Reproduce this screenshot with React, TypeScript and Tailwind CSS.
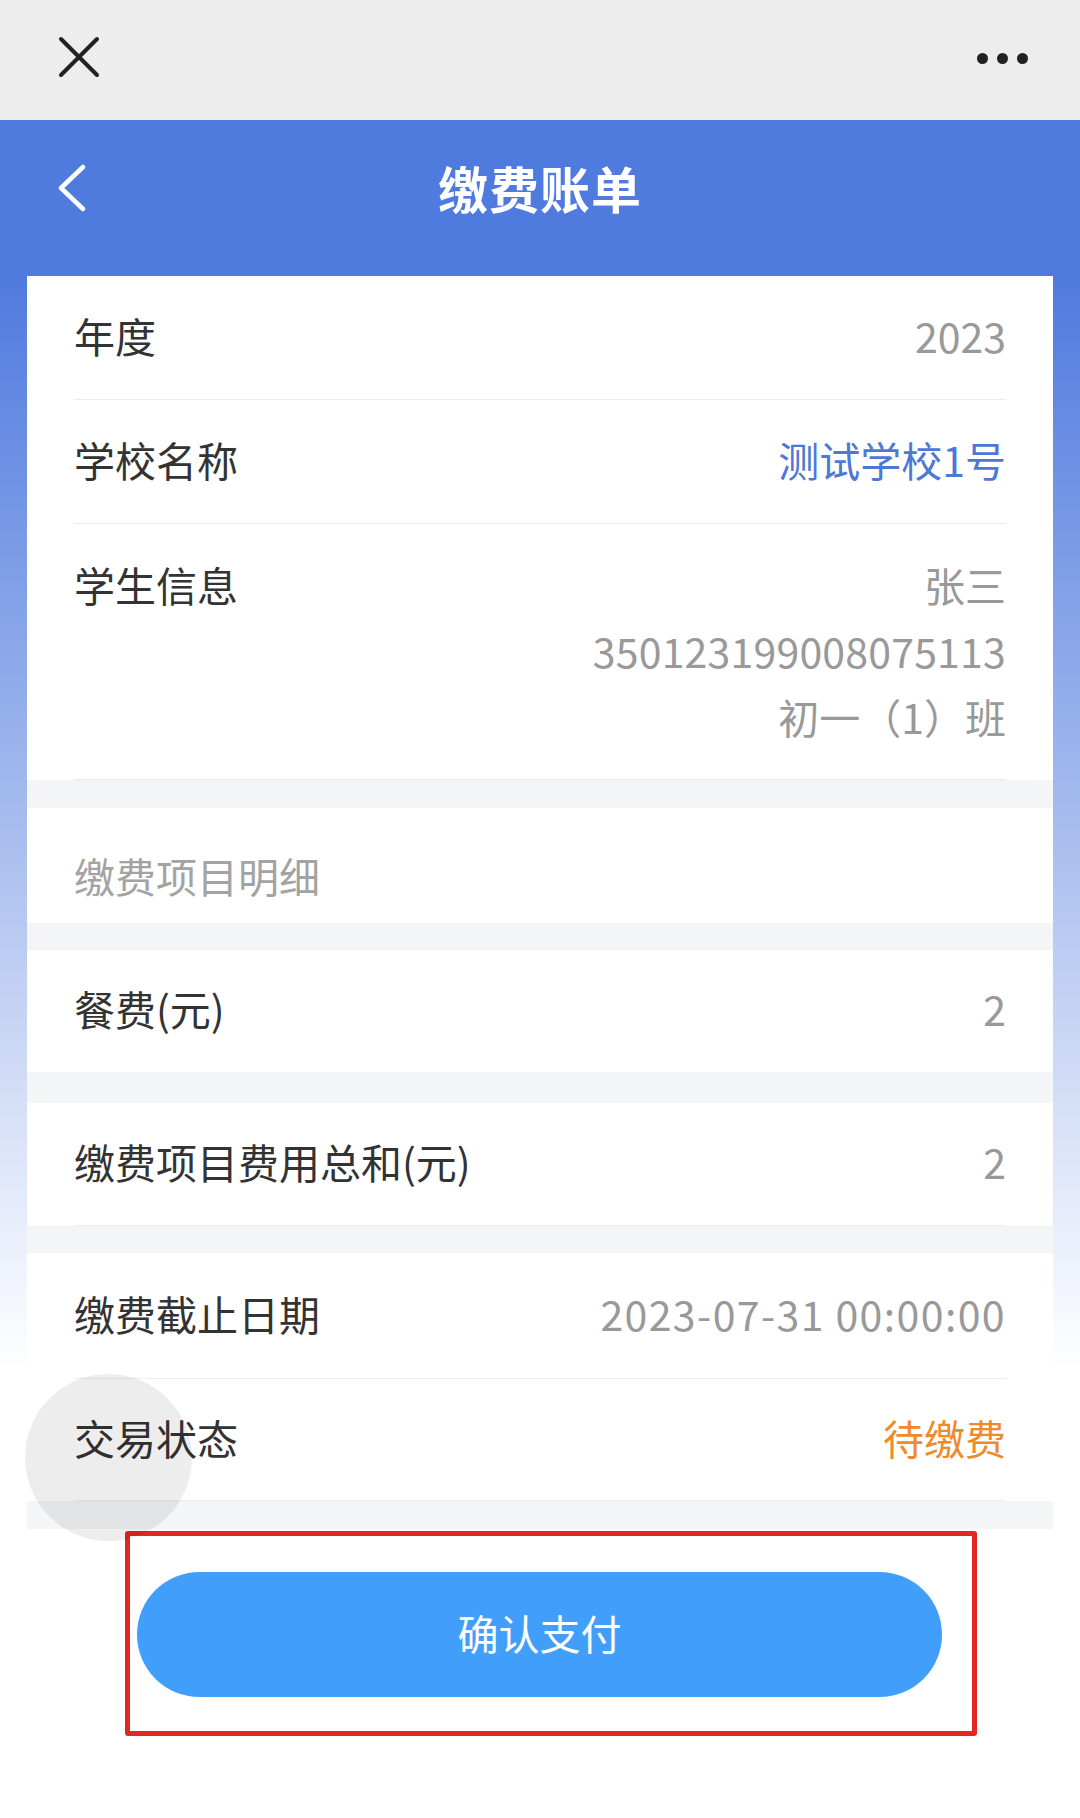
import React from "react";

function Row({
  label,
  value,
  valueClass = "text-[#999999]",
  height = "h-[123px]",
}: {
  label: string;
  value: string;
  valueClass?: string;
  height?: string;
}) {
  return (
    <div className={`flex items-center justify-between px-[47px] pb-[6px] ${height}`}>
      <span className="text-[41px] leading-[66px] text-[#333333]">{label}</span>
      <span className={`text-[41px] leading-[66px] ${valueClass}`}>{value}</span>
    </div>
  );
}

function Divider() {
  return <div className="mx-[47px] h-px bg-[#ededed]" />;
}

function Band({ h }: { h: string }) {
  return <div className={`${h} bg-[#f4f5f7]`} />;
}

export default function App() {
  return (
    <div
      className="relative w-[1080px] h-[1818px] overflow-hidden bg-white"
      style={{ fontFamily: '"Noto Sans CJK SC", "Noto Sans", sans-serif' }}
    >
      {/* top bar */}
      <div className="flex h-[120px] items-center justify-between bg-[#ededed] pl-[58px] pr-[52px]">
        <svg width="42" height="42" viewBox="0 0 42 42" className="mt-[-6px]">
          <path d="M3 3 L39 39 M39 3 L3 39" stroke="#222" strokeWidth="4" strokeLinecap="round" />
        </svg>
        <div className="flex items-center gap-[9px] mt-[-4px]">
          <span className="h-[11px] w-[11px] rounded-full bg-[#222]" />
          <span className="h-[11px] w-[11px] rounded-full bg-[#222]" />
          <span className="h-[11px] w-[11px] rounded-full bg-[#222]" />
        </div>
      </div>

      {/* gradient section */}
      <div className="bg-[linear-gradient(180deg,#4f7ade_0px,#4f7ade_156px,#ffffff_1250px)]">
        {/* header */}
        <div className="relative flex h-[156px] items-center justify-center">
          <svg
            width="32"
            height="50"
            viewBox="0 0 32 50"
            className="absolute left-[56px] top-[44px]"
          >
            <path d="M27 3 L5 24 L27 45" fill="none" stroke="#fff" strokeWidth="4.5" strokeLinecap="round" strokeLinejoin="round" />
          </svg>
          <h1 className="mt-[-22px] text-[50px] font-bold tracking-[1px] text-white">缴费账单</h1>
        </div>

        {/* card */}
        <div className="mx-[27px] bg-white">
          <Row label="年度" value="2023" />
          <Divider />
          <Row label="学校名称" value="测试学校1号" valueClass="text-[#4d78d6]" />
          <Divider />
          <div className="flex h-[255px] items-start justify-between px-[47px] pt-[27px]">
            <span className="text-[41px] leading-[66px] text-[#333333]">学生信息</span>
            <div className="flex flex-col items-end text-[41px] leading-[66px] text-[#999999]">
              <span>张三</span>
              <span className="tracking-[0.2px]">350123199008075113</span>
              <span>初一（1）班</span>
            </div>
          </div>
          <Divider />
          <Band h="h-[28px]" />
          <div className="h-[115px] px-[47px] pt-[34px]">
            <span className="text-[41px] leading-[66px] text-[#a3a3a3]">缴费项目明细</span>
          </div>
          <Band h="h-[27px]" />
          <Row label="餐费(元)" value="2" height="h-[122px]" />
          <Band h="h-[31px]" />
          <Row label="缴费项目费用总和(元)" value="2" height="h-[122px]" />
          <Divider />
          <Band h="h-[27px]" />
          <Row
            label="缴费截止日期"
            value="2023-07-31 00:00:00"
            valueClass="text-[#999999] tracking-[1.4px]"
            height="h-[125px]"
          />
          <Divider />
          <Row label="交易状态" value="待缴费" valueClass="text-[#ee8a2a]" height="h-[121px]" />
          <Divider />
          <Band h="h-[28px]" />
        </div>
      </div>

      {/* pay button with red annotation box */}
      <div className="ml-[125px] mt-[2px] h-[205px] w-[852px] rounded-[3px] border-[5px] border-[#e3261f]">
        <button className="ml-[7px] mt-[36px] flex h-[125px] w-[805px] items-center justify-center rounded-full bg-[#419ffb] pb-[4px] text-[41px] text-white">
          确认支付
        </button>
      </div>

      {/* touch indicator */}
      <div className="absolute left-[25px] top-[1374px] h-[167px] w-[167px] rounded-full bg-[rgba(0,0,0,0.07)]" />
    </div>
  );
}
